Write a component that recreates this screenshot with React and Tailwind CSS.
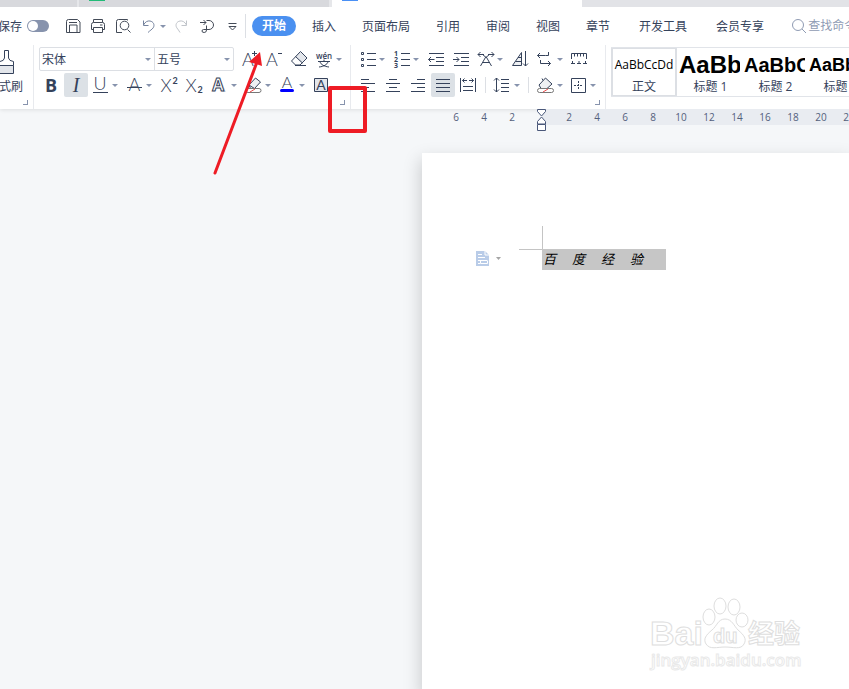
import React, { useState } from 'react'

const menuTabs = ['插入', '页面布局', '引用', '审阅', '视图', '章节'];
const extraTabs = ['开发工具', '会员专享'];

const rulerLeft = [6, 4, 2];
const rulerRight = [2, 4, 6, 8, 10, 12, 14, 16, 18, 20, 22];

const headings = [
    { nombre: '标题 1', muestra: 'AaBb', size: 'text-2xl' },
    { nombre: '标题 2', muestra: 'AaBbC', size: 'text-xl' },
    { nombre: '标题 3', muestra: 'AaBbC', size: 'text-lg' },
];

const Icon = ({ children, className = '' }) => (
    <svg className={`block size-6 shrink-0 ${className}`} viewBox="0 0 24 24" fill="none" stroke="currentColor" aria-hidden="true">
        {children}
    </svg>
)

const Tool = ({ label, className = '', active = false, children }) => (
    <button aria-label={label} className={`size-6 shrink-0 ${active ? 'rounded-xs bg-[#dce1e6]' : ''} ${className}`}>
        <Icon>{children}</Icon>
    </button>
)

const Arrow = () => (
    <svg className="block h-[3px] w-[6px]" viewBox="0 0 6 3" fill="#8793ad" aria-hidden="true">
        <path d="M0 0h6L3 3z" />
    </svg>
)

const Caret = ({ label }) => (
    <button aria-label={label} className="flex h-6 w-[6px] shrink-0 items-center justify-center">
        <Arrow />
    </button>
)

const Letter = ({ x, y = 18, size = 18, family = 'Lato', weight = 300, italic = false, children }) => (
    <text x={x} y={y} fontSize={size} fontFamily={`${family}, 'Noto Sans CJK SC', sans-serif`} fontWeight={weight}
        fontStyle={italic ? 'italic' : 'normal'} fill="currentColor" stroke="none" textAnchor="middle">
        {children}
    </text>
)

const Launcher = ({ label }) => (
    <button aria-label={label} className="absolute right-[5px] bottom-1 size-[5px] border-r border-b border-[#8793ad]"></button>
)

const TabStrip = () => (
    <div className="flex h-[7px] bg-[#d8d9dd]">
        <div className="w-[77px]"></div>
        <div className="w-[2px] bg-[#e6e7ea]"></div>
        <div className="w-[250px] pl-[10px]"><div className="h-px w-4 bg-[#22bb77]"></div></div>
        <div className="w-[3px] bg-[#e6e7ea]"></div>
        <div className="w-[250px] bg-white pl-[10px]"><div className="h-px w-4 bg-[#4a90f5]"></div></div>
        <div className="flex-1 bg-[#e2e3e7]"></div>
    </div>
)

const MenuBar = () => (
    <div className="flex h-[38px] items-center overflow-hidden text-xs whitespace-nowrap">
        <label htmlFor="autosave" className="flex w-[22px] shrink-0 justify-end overflow-hidden pt-px">保存</label>
        <input id="autosave" type="checkbox" role="switch"
            className="ml-[5px] h-3 w-[22px] shrink-0 appearance-none rounded-full bg-[#8793ad] before:ml-px before:mt-px before:block before:size-[10px] before:rounded-full before:bg-white" />
        <div className="ml-3 flex shrink-0 text-[#434a57]">
            <Tool label="保存">
                <path d="M5.500 18.500v-11q0-2 2-2h9l2.500 2.500v10.500zM8.500 18.500v-7.500h7.500v7.500M8 8.500h8" />
            </Tool>
            <Tool label="打印" className="ml-px">
                <path d="M7.500 8.500v-3h9v3M7.500 15.500h-2v-5q0-2 2-2h9q2 0 2 2v5h-2M7.500 13.500h9v5h-9zM14 11h2.500" />
            </Tool>
            <Tool label="打印预览" className="ml-px">
                <path d="M11 18.500h-5.500v-11q0-2 2-2h9v1M16.500 15.500l3 3" />
                <circle cx="13.500" cy="11.500" r="4.300" />
            </Tool>
            <Tool label="撤销" className="ml-px text-[#75839e]">
                <path d="M7.500 6.500v5h5M7.500 11C9 8 11.500 6.500 14 7c3.500.6 5 4 3.200 6.800C16 15.500 14 16.500 12 18.500" />
            </Tool>
            <Caret label="撤销选项" />
            <Tool label="恢复" className="ml-[3px] text-[#c0c4ca]">
                <path d="M17.500 6.500v5h-5M17.500 11C16 8 13.500 6.500 11 7c-3.500.6-5 4-3.200 6.800C9 15.500 10 16.500 11 18.500" />
            </Tool>
            <Tool label="格式" className="ml-[2px]">
                <path d="M5 8.500h6M8.500 6l2.500 2.500L8.500 11M11.500 6.500h2.500a4.500 4.500 0 0 1 0 9H8.500M11.500 11.500v4.500q0 2.500-2.300 2.500T7 17t1.500-1.500" />
            </Tool>
            <Tool label="自定义" className="ml-px">
                <path d="M8.500 9.500h8M9 12.500l3.500 3.500 3.500-3.500z" />
            </Tool>
        </div>
        <div className="ml-px h-6 w-px shrink-0 bg-[#dcdfe4]"></div>
        <nav className="ml-[6px] flex shrink-0 items-center">
            <button className="h-5 w-11 rounded-full bg-[#4a90f0] font-bold text-white">开始</button>
            <div className="ml-4 flex gap-[26px] pt-px">
                {menuTabs.map(tab => (
                    <button key={tab}>{tab}</button>
                ))}
            </div>
            <div className="ml-[29px] flex gap-[29px] pt-px">
                {extraTabs.map(tab => (
                    <button key={tab}>{tab}</button>
                ))}
            </div>
        </nav>
        <button className="ml-[27px] flex shrink-0 items-center text-[#8f9bb3]">
            <svg className="mr-px size-4" viewBox="0 0 16 16" fill="none" stroke="currentColor" aria-hidden="true">
                <circle cx="7" cy="7" r="5.500" />
                <path d="M11 11l4 4" />
            </svg>
            查找命令
        </button>
    </div>
)

const FontSelect = ({ label, value, onChange, options, className }) => (
    <div className={`relative ${className}`}>
        <select aria-label={label} value={value} onChange={e => onChange(e.target.value)}
            className="block h-[22px] w-full appearance-none pt-px pl-[2px] text-xs leading-[20px] focus:outline-none">
            {options.map(option => (
                <option key={option} value={option}>{option}</option>
            ))}
        </select>
        <span className="pointer-events-none absolute top-[10px] right-[3px]"><Arrow /></span>
    </div>
)

const FontGroup = () => {
    const [font, setFont] = useState('宋体');
    const [size, setSize] = useState('五号');

    return (
        <div className="relative w-[317px] shrink-0 border-r border-[#e8eaee] pt-[2px] pl-[5px]">
            <div className="flex">
                <div className="flex h-6 w-[195px] rounded-xs border border-[#dcdfe4]">
                    <FontSelect label="字体" value={font} onChange={setFont} options={['宋体', '黑体', '楷体']} className="w-[115px] border-r border-[#dcdfe4]" />
                    <FontSelect label="字号" value={size} onChange={setSize} options={['四号', '五号', '六号']} className="flex-1" />
                </div>
                <Tool label="增大字号" className="ml-1">
                    <Letter x="10" y="19">A</Letter>
                    <path d="M14 6.500h5M16.500 4v5" />
                </Tool>
                <Tool label="减小字号">
                    <Letter x="10" y="19">A</Letter>
                    <path d="M16 6.500h4" />
                </Tool>
                <Tool label="清除格式" className="ml-px">
                    <path d="M8 9.500l5.500-4.500 6 6-5.500 5z" fill="#e3e6eb" stroke="none" />
                    <path d="M13.500 4.500l6.500 6.500-7 7H8.500L4.500 14zM8.500 9.500l7 6.500M8 18.500h11" />
                </Tool>
                <Tool label="拼音指南" className="ml-px">
                    <Letter x="12" y="12" size="8" family="Open Sans" weight="600">wén</Letter>
                    <path d="M6 14.500h12M12 12.500v2M8 15c1 2.500 4 4.500 9 5M16 15c-1 2.500-4 4.500-9 5" />
                </Tool>
                <Caret label="拼音选项" />
            </div>
            <div className="mt-[2px] flex">
                <Tool label="加粗"><Letter x="12" y="19" size="18" family="Open Sans" weight="700">B</Letter></Tool>
                <Tool label="倾斜" active className="ml-px"><Letter x="12" y="19" size="20" family="Liberation Serif" weight="400" italic>I</Letter></Tool>
                <Tool label="下划线">
                    <Letter x="12" y="17">U</Letter>
                    <path d="M5 19.500h15" />
                </Tool>
                <Caret label="下划线选项" />
                <Tool label="删除线" className="ml-1">
                    <Letter x="12.500" y="18">A</Letter>
                    <path d="M5 14.500h15" />
                </Tool>
                <Caret label="删除线选项" />
                <Tool label="上标" className="ml-[5px]">
                    <Letter x="9" y="19">X</Letter>
                    <Letter x="18" y="11" size="9" weight="700">2</Letter>
                </Tool>
                <Tool label="下标" className="ml-px">
                    <Letter x="9" y="19">X</Letter>
                    <Letter x="18" y="20" size="9" weight="700">2</Letter>
                </Tool>
                <Tool label="文字效果" className="ml-px">
                    <path d="M13 5l6 14h-3L11 7z" fill="#dfe2e8" stroke="none" />
                    <text x="11" y="18" fontSize="17" fontFamily="Open Sans, sans-serif" fontWeight="700" fill="#fff" stroke="currentColor" textAnchor="middle">A</text>
                </Tool>
                <Caret label="效果选项" />
                <Tool label="突出显示" className="ml-1">
                    <path d="M8 12l6.500-7 5 4-6 6.500H9.500zM8 12l5.500 3.500M5 16.500l3.500-4" fill="#eef0f3" />
                    <path d="M7 15.500h11q2 0 2 2t-2 2H7q-2 0-2-2t2-2z" stroke="#777" fill="#fff" />
                    <path d="M9 19l5-3" stroke="#e94b4b" />
                </Tool>
                <Caret label="突出显示选项" />
                <Tool label="字体颜色" className="ml-1">
                    <Letter x="12" y="15" size="16">A</Letter>
                    <path d="M6.500 17.500h11" stroke="#0000ff" strokeWidth="3" strokeLinecap="round" />
                </Tool>
                <Caret label="颜色选项" />
                <Tool label="字符底纹" className="ml-1">
                    <path d="M5.500 5.500h13v13h-13z" fill="#e3e6eb" />
                    <Letter x="12" y="17" size="14" weight="400">A</Letter>
                </Tool>
            </div>
            <Launcher label="字体设置" />
        </div>
    )
}

const ParagraphGroup = () => (
    <div className="relative w-[255px] shrink-0 border-r border-[#e8eaee] pt-[2px] pl-1">
        <div className="flex">
            <Tool label="项目符号">
                <path d="M12 6.500h9M12 12.500h9M12 18.500h9" />
                <path d="M6.500 5.500h2v2h-2zM6.500 11.500h2v2h-2zM6.500 17.500h2v2h-2z" />
            </Tool>
            <Caret label="项目符号选项" />
            <Tool label="编号" className="ml-1">
                <path d="M12 6.500h9M12 12.500h9M12 18.500h9" />
                <Letter x="7" y="9" size="7" family="Open Sans" weight="700">1</Letter>
                <Letter x="7" y="15" size="7" family="Open Sans" weight="700">2</Letter>
                <Letter x="7" y="21" size="7" family="Open Sans" weight="700">3</Letter>
            </Tool>
            <Caret label="编号选项" />
            <Tool label="减少缩进" className="ml-[5px]">
                <path d="M5 6.500h15M12 10.500h8M12 14.500h8M5 18.500h15M4.500 12.500h6M7 10l-2.500 2.500L7 15" />
            </Tool>
            <Tool label="增加缩进" className="ml-px">
                <path d="M5 6.500h15M12 10.500h8M12 14.500h8M5 18.500h15M4 12.500h6M7.500 10l2.500 2.500L7.500 15" />
            </Tool>
            <Tool label="中文版式">
                <path d="M7.500 19l5.500-9.500 5.500 9.500M9.500 15.500h7M12.500 10L9 7M13.500 10L17 7M5 7.500h6M7.500 5L5 7.500 7.500 10M15 7.500h6M18.500 5L21 7.500 18.500 10" />
            </Tool>
            <Caret label="版式选项" />
            <Tool label="排序" className="ml-[5px]">
                <path d="M13.500 5.500v13H4.500zM10 10.500h3.500M7.500 14.500h6" fill="#eef0f3" />
                <path d="M17.500 4v15M15 16.500l2.500 2.500 2.500-2.500" />
            </Tool>
            <Tool label="显示段落标记" className="ml-px">
                <path d="M4.500 8.500h8M7 6L4.500 8.500 7 11M15.500 5v3.500h-3M7.500 13v3.500h10M15 14l2.500 2.500L15 19" />
            </Tool>
            <Caret label="段落标记选项" />
            <Tool label="制表位" className="ml-1">
                <path d="M4.500 12v-5.500h15V12M7.500 6.500v3M10.500 6.500v3M13.500 6.500v3M16.500 6.500v3M4 16.500h4M5.500 14v2.500M10 16.500h4M12 14v2.500M16 16.500h4M18.500 14v2.500" />
            </Tool>
        </div>
        <div className="mt-[2px] ml-px flex">
            <Tool label="左对齐"><path d="M5 6.500h8M5 10.500h14M5 14.500h8M5 18.500h14" /></Tool>
            <Tool label="居中" className="ml-px"><path d="M8 6.500h8M5 10.500h14M8 14.500h8M5 18.500h14" /></Tool>
            <Tool label="右对齐" className="ml-px"><path d="M11 6.500h8M5 10.500h14M11 14.500h8M5 18.500h14" /></Tool>
            <Tool label="两端对齐" active className="ml-px"><path d="M5 6.500h14M5 10.500h14M5 14.500h14M5 18.500h14" /></Tool>
            <Tool label="分散对齐" className="ml-px">
                <path d="M4.500 5v14M19.500 5v14M6.500 7.500h4.500M8.500 5.500l-2 2 2 2M13 7.500h4.500M15.500 5.500l2 2-2 2M7 13.500h10M7 17.500h10" />
            </Tool>
            <div className="mt-1 ml-[5px] h-4 w-px bg-[#dcdfe4]"></div>
            <Tool label="行距" className="ml-1">
                <path d="M6.500 5v14M4 7.500L6.500 5 9 7.500M4 16.500L6.500 19 9 16.500M11 6.500h8M11 10.500h8M11 14.500h8M11 18.500h8" />
            </Tool>
            <Caret label="行距选项" />
            <div className="mt-1 ml-2 h-4 w-px bg-[#dcdfe4]"></div>
            <Tool label="底纹颜色" className="ml-1">
                <path d="M6 12l6.500-7 6.500 6-5 4.500H8zM10 7.500l-1-2" fill="#eef0f3" />
                <path d="M6.500 15.500h12q2 0 2 2t-2 2h-12q-2 0-2-2t2-2z" stroke="#777" fill="#fff" />
                <path d="M10 19l5-3" stroke="#e94b4b" />
            </Tool>
            <Caret label="底纹选项" />
            <Tool label="边框" className="ml-[3px]">
                <path d="M5.500 5.500h14v14h-14z" />
                <path d="M12.500 8v9M8 12.500h9" strokeDasharray="2 1" />
            </Tool>
            <Caret label="边框选项" />
        </div>
        <Launcher label="段落设置" />
    </div>
)

const StyleGallery = () => (
    <div className="mt-[2px] ml-[5px] flex h-[50px] min-w-0 flex-1 overflow-hidden border-y border-[#e1e4e9]">
        <button className="-my-px flex w-[66px] shrink-0 flex-col items-center rounded-xs border-2 border-[#dcdfe4] pt-[7px]">
            <span className="font-['Open_Sans'] text-xs leading-[18px] text-black">AaBbCcDd</span>
            <span className="mt-[5px] text-xs leading-4">正文</span>
        </button>
        {headings.map(({ nombre, muestra, size }) => (
            <button key={nombre} className="flex w-[65px] shrink-0 flex-col pt-1 pl-[2px]">
                <span className={`block h-[26px] w-[61px] overflow-hidden text-left font-['Liberation_Sans'] leading-[26px] font-bold text-black ${size}`}>{muestra}</span>
                <span className="mt-px self-center text-xs leading-4">{nombre}</span>
            </button>
        ))}
    </div>
)

const Ribbon = () => (
    <div className="flex h-16 overflow-hidden">
        <div className="relative w-[34px] shrink-0 border-r border-[#e8eaee] pt-1">
            <button className="block w-[23px] text-xs">
                <svg className="block h-[25px] w-[15px]" viewBox="0 0 15 25" fill="none" stroke="currentColor" aria-hidden="true">
                    <path d="M-1 16.500h14.500v8H-1z" fill="#e3e6eb" />
                    <path d="M4.500 9V1.500h4V9q.5 3 5 3.500v4M4.500 9Q4 12 0 12.500" />
                </svg>
                <span className="mt-[5px] flex justify-end overflow-hidden leading-4 whitespace-nowrap">式刷</span>
            </button>
            <Launcher label="剪贴板设置" />
        </div>
        <FontGroup />
        <ParagraphGroup />
        <StyleGallery />
    </div>
)

const Ruler = () => (
    <div className="flex h-4 font-['Open_Sans'] text-[10px] leading-4 text-[#53607c]">
        <div className="flex w-[541px] shrink-0 justify-end pr-[15px]">
            {rulerLeft.map(n => (
                <span key={n} className="w-7 text-center">{n}</span>
            ))}
        </div>
        <div className="relative min-w-0 flex-1 bg-[#e9ecf1]">
            <div className="flex overflow-hidden pl-[14px]">
                {rulerRight.map(n => (
                    <span key={n} className="w-7 shrink-0 text-center">{n}</span>
                ))}
            </div>
            <svg className="absolute top-0 -left-1 h-[22px] w-[9px]" viewBox="0 0 9 22" fill="#fff" stroke="#4a587a" aria-hidden="true">
                <path d="M.5.500h8v2L4.500 7l-4-4.500zM4.500 8l4 4.500v2.500h-8v-2.500zM.5 15.500h8v6h-8z" />
            </svg>
        </div>
    </div>
)

const Documento = () => (
    <main className="mt-7 ml-[422px] flex-1 bg-white pt-[73px] shadow-[0_8px_16px_2px_rgba(0,0,0,0.17)]">
        <div className="flex pl-[54px]">
            <button aria-label="粘贴选项" className="mt-6 flex h-4 w-[25px] items-center justify-between">
                <svg className="h-[15px] w-[13px]" viewBox="0 0 13 15" aria-hidden="true">
                    <path d="M0 0h9l4 4v11H0z" fill="#b9cce8" />
                    <path d="M9 0v4h4M2 3.500h4M2 6.500h7M2 9.500h9M4.500 9.500v3h7v-3M2 12.500h2" fill="none" stroke="#fff" />
                </svg>
                <svg className="h-[3px] w-[5px]" viewBox="0 0 5 3" fill="#a5a5a5" aria-hidden="true"><path d="M0 0h5L2.500 3z" /></svg>
            </button>
            <div className="ml-[18px] h-6 w-6 border-r border-b border-[#c4c4c4]"></div>
            <p className="mt-[23px] -ml-px flex h-[21px] w-[124px] bg-[#c6c6c6] pl-px font-['Noto_Sans_CJK_SC'] text-[13px] leading-5 text-black italic">
                {['百', '度', '经', '验'].map(c => (
                    <span key={c} className="w-[29px]">{c}</span>
                ))}
            </p>
        </div>
    </main>
)

// site mark in the lower right corner
const Watermark = () => (
    <svg className="pointer-events-none absolute right-11 bottom-4 h-[80px] w-[156px]" viewBox="0 0 156 80" fill="#fff" stroke="#dedede" role="img" aria-label="Baidu 经验 jingyan.baidu.com">
        <text x="1" y="52" fontSize="34" fontWeight="700" fontFamily="Liberation Sans, sans-serif">Bai</text>
        <ellipse cx="60" cy="24" rx="6" ry="8" />
        <ellipse cx="71" cy="13" rx="6" ry="8" />
        <ellipse cx="85" cy="14" rx="6" ry="8" />
        <ellipse cx="93" cy="27" rx="6" ry="7" />
        <path d="M76 26c7 0 9 7 13 11 6 5 9 9 6 14-3 6-11 3-19 3s-15 3-19-3c-3-5 0-9 6-14 5-4 6-11 13-11z" />
        <text x="64" y="50" fontSize="20" fontWeight="700" fontFamily="Liberation Sans, sans-serif">du</text>
        <text x="99" y="50" fontSize="26" fontWeight="700" fontFamily="Noto Sans CJK SC, sans-serif">经验</text>
        <text x="2" y="73" fontSize="17" fontWeight="600" fontFamily="Open Sans, sans-serif" stroke="#e9e9e9">jingyan.baidu.com</text>
    </svg>
)

const Annotations = () => (
    <>
        <svg className="pointer-events-none absolute top-[50px] left-[210px] h-[126px] w-[60px]" viewBox="0 0 60 126" aria-hidden="true">
            <path d="M5 123L47 12" fill="none" stroke="#ee1c25" strokeWidth="3" strokeLinecap="round" />
            <path d="M50 2l2 14-6-2-7-2z" fill="#ee1c25" />
        </svg>
        <div className="pointer-events-none absolute top-[86px] left-[328px] h-[47px] w-[39px] rounded-xs border-4 border-[#ee1c25]"></div>
    </>
)

export default function App() {
    return (
        <div className="relative flex min-h-screen flex-col overflow-hidden bg-[#f5f7f9] font-['Open_Sans','Noto_Sans_CJK_SC',sans-serif] text-[#35425b]">
            <header className="bg-white shadow-[0_1px_4px_rgba(0,0,0,0.1)]">
                <TabStrip />
                <MenuBar />
                <Ribbon />
            </header>
            <Ruler />
            <Documento />
            <Watermark />
            <Annotations />
        </div>
    )
}
